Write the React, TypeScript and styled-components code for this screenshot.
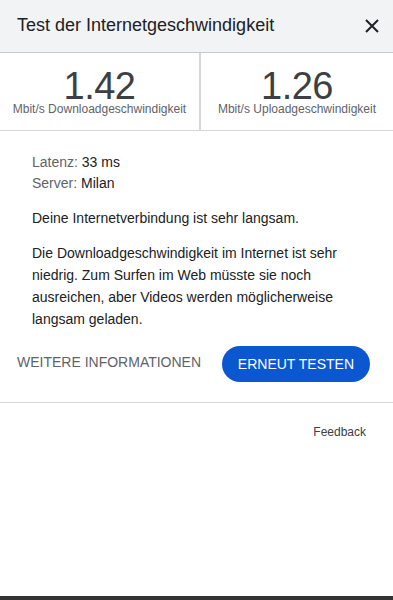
import React from 'react';
import styled, { createGlobalStyle } from 'styled-components';

const GlobalStyle = createGlobalStyle`
  html, body {
    margin: 0;
    padding: 0;
    background: #ffffff;
    font-family: "Liberation Sans", Arial, sans-serif;
  }
  #root {
    min-height: 100vh;
  }
`;

const Page = styled.div`
  display: flex;
  flex-direction: column;
  min-height: 100vh;
  background: #ffffff;
`;

const Header = styled.header`
  display: flex;
  align-items: center;
  justify-content: space-between;
  height: 53px;
  padding: 0 11px 1px 17px;
  background: #f1f3f4;
  border-bottom: 1px solid #c9cacc;
  box-sizing: border-box;
`;

const Title = styled.h1`
  margin: 0;
  font-size: 18px;
  font-weight: 400;
  color: #202124;
`;

const CloseButton = styled.button`
  display: flex;
  align-items: center;
  justify-content: center;
  width: 20px;
  height: 20px;
  padding: 0;
  border: none;
  background: transparent;
  color: #202124;
  cursor: pointer;
`;

const Stats = styled.div`
  display: grid;
  grid-template-columns: 201px 1fr;
  height: 78px;
  border-bottom: 1px solid #d6d6d6;
  box-sizing: border-box;
`;

const Stat = styled.div<{ $divider?: boolean }>`
  display: flex;
  flex-direction: column;
  align-items: center;
  padding-top: 16px;
  border-right: ${p => (p.$divider ? '2px solid #d6d6d6' : 'none')};
`;

const Value = styled.div`
  font-size: 38px;
  line-height: 34px;
  letter-spacing: -0.5px;
  color: #3c4043;
`;

const Unit = styled.div`
  font-size: 12px;
  line-height: 13px;
  color: #5f6368;
`;

const Body = styled.div`
  padding: 21px 32px 0;
  font-size: 14px;
  color: #202124;
`;

const InfoLine = styled.div`
  line-height: 21px;
`;

const InfoLabel = styled.span`
  color: #5f6368;
`;

const Paragraph = styled.p`
  margin: 13px 0 0;
  line-height: 22px;
`;

const Actions = styled.div`
  display: flex;
  align-items: center;
  justify-content: space-between;
  padding: 16px 23px 20px 17px;
  border-bottom: 1px solid #d6d6d6;
`;

const TextButton = styled.button`
  padding: 0;
  margin-top: -5px;
  border: none;
  background: transparent;
  font-family: inherit;
  font-size: 14px;
  color: #5f6368;
  cursor: pointer;
`;

const PrimaryButton = styled.button`
  height: 36px;
  padding: 0 16px;
  border: none;
  border-radius: 18px;
  background: #0b57d0;
  font-family: inherit;
  font-size: 14px;
  color: #ffffff;
  cursor: pointer;
`;

const FeedbackRow = styled.div`
  display: flex;
  justify-content: flex-end;
  padding: 22px 27px 0;
`;

const FeedbackLink = styled.a`
  font-size: 12px;
  color: #3c4043;
  text-decoration: none;
`;

const BottomBar = styled.div`
  margin-top: auto;
  height: 4px;
  background: #333333;
`;

export default function App() {
  return (
    <>
      <GlobalStyle />
      <Page>
        <Header>
          <Title>Test der Internetgeschwindigkeit</Title>
          <CloseButton aria-label="Schließen">
            <svg width="16" height="16" viewBox="0 0 16 16">
              <path d="M2 2 L14 14 M14 2 L2 14" stroke="currentColor" strokeWidth="2" />
            </svg>
          </CloseButton>
        </Header>

        <Stats>
          <Stat $divider>
            <Value>1.42</Value>
            <Unit>Mbit/s Downloadgeschwindigkeit</Unit>
          </Stat>
          <Stat>
            <Value>1.26</Value>
            <Unit>Mbit/s Uploadgeschwindigkeit</Unit>
          </Stat>
        </Stats>

        <Body>
          <InfoLine>
            <InfoLabel>Latenz:</InfoLabel> 33 ms
          </InfoLine>
          <InfoLine>
            <InfoLabel>Server:</InfoLabel> Milan
          </InfoLine>
          <Paragraph>Deine Internetverbindung ist sehr langsam.</Paragraph>
          <Paragraph>
            Die Downloadgeschwindigkeit im Internet ist sehr niedrig. Zum Surfen im Web müsste sie noch
            ausreichen, aber Videos werden möglicherweise langsam geladen.
          </Paragraph>
        </Body>

        <Actions>
          <TextButton>WEITERE INFORMATIONEN</TextButton>
          <PrimaryButton>ERNEUT TESTEN</PrimaryButton>
        </Actions>

        <FeedbackRow>
          <FeedbackLink href="#">Feedback</FeedbackLink>
        </FeedbackRow>

        <BottomBar />
      </Page>
    </>
  );
}
